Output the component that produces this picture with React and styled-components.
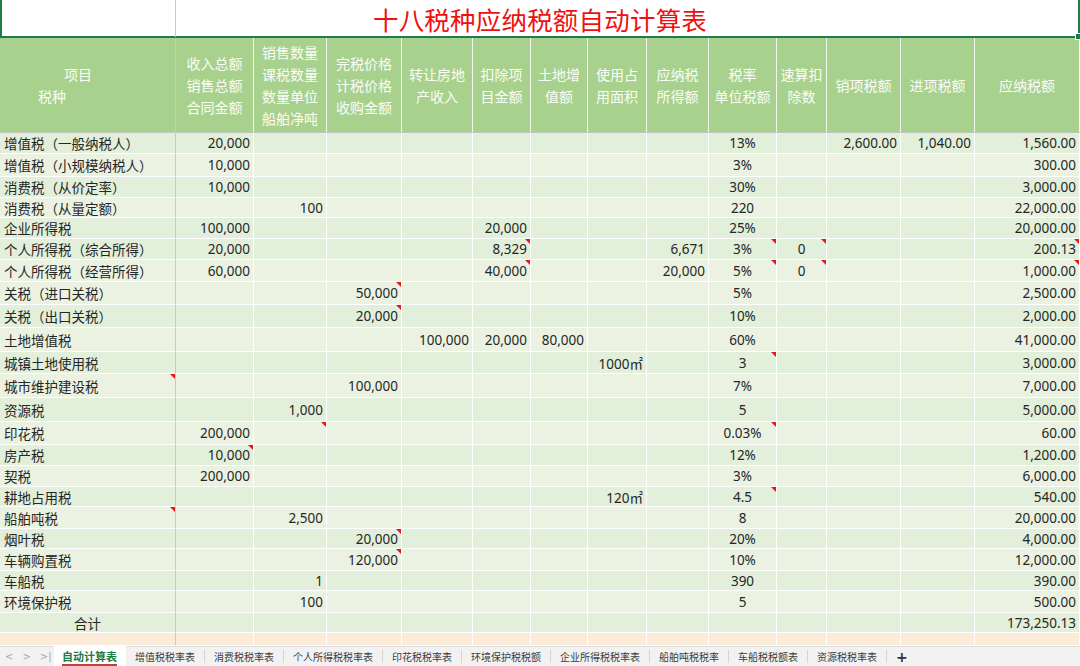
import React from 'react';
import styled, { createGlobalStyle } from 'styled-components';

const COLS = [176, 78, 73, 75, 71, 58, 57, 59, 62, 68, 50, 74, 74, 105];
const GRID = COLS.map((w) => w + 'px').join(' ');
const ALIGN = ['left', 'right', 'right', 'right', 'right', 'right', 'right', 'right', 'right', 'center', 'center', 'right', 'right', 'right'];

const GlobalStyle = createGlobalStyle`
  html, body {
    margin: 0;
    padding: 0;
    background: #ffffff;
    overflow: hidden;
  }
  body {
    font-family: "Noto Sans", "Noto Sans CJK SC", sans-serif;
  }
`;

const Sheet = styled.div`
  width: 1080px;
  height: 666px;
  display: flex;
  flex-direction: column;
  overflow: hidden;
  background: #ffffff;
`;

const TitleRow = styled.div`
  position: relative;
  display: grid;
  grid-template-columns: 174px 1fr;
  height: 38px;
  box-sizing: border-box;
  border-left: 2px solid #1f7a4c;
  border-right: 2px solid #1f7a4c;
  border-bottom: 2px solid #1f7a4c;
`;

const FreezeBlank = styled.div`
  border-right: 1px solid #c8c8c8;
`;

const Title = styled.div`
  display: flex;
  align-items: center;
  justify-content: center;
  padding-right: 174px;
  color: #f01010;
  font-family: "Noto Sans CJK SC", sans-serif;
  font-size: 25.5px;
  letter-spacing: 0.2px;
`;

const FillHandle = styled.span`
  position: absolute;
  right: -4px;
  bottom: -4px;
  width: 5px;
  height: 5px;
  background: #1f7a4c;
  border: 1px solid #ffffff;
`;

const HeaderRow = styled.div`
  display: grid;
  grid-template-columns: ${GRID};
  height: 95px;
  background: #a9d18e;
  border-bottom: 1px solid #c2c8bd;
  box-sizing: border-box;
`;

const HeadCell = styled.div`
  display: flex;
  flex-direction: column;
  align-items: center;
  justify-content: center;
  border-right: 1px solid ${(p) => (p.$freeze ? '#c8c8c8' : 'rgba(255,255,255,0.85)')};
  color: #fbfdf7;
  font-family: "Noto Sans CJK SC", sans-serif;
  font-size: 14px;
  line-height: 22px;
  text-align: center;
  overflow: hidden;
  white-space: nowrap;
`;

const CornerCell = styled(HeadCell)`
  align-items: flex-start;
`;

const CornerLine = styled.span`
  margin-left: ${(p) => p.$indent}px;
`;

const Row = styled.div`
  display: grid;
  grid-template-columns: ${GRID};
  height: ${(p) => p.$h}px;
  background: ${(p) => p.$bg};
`;

const Cell = styled.div`
  position: relative;
  display: flex;
  align-items: center;
  justify-content: ${(p) => (p.$align === 'left' ? 'flex-start' : p.$align === 'center' ? 'center' : 'flex-end')};
  padding: 0 ${(p) => (p.$align === 'right' ? 3 : 0)}px 0 ${(p) => (p.$align === 'left' ? 4 : 0)}px;
  box-sizing: border-box;
  border-right: 1px solid ${(p) => (p.$freeze ? '#c8c8c8' : '#ffffff')};
  border-bottom: 1px solid #ffffff;
  color: #262626;
  font-size: 13.5px;
  white-space: nowrap;
  overflow: hidden;

  &::after {
    content: '';
    display: ${(p) => (p.$note ? 'block' : 'none')};
    position: absolute;
    top: 0;
    right: 0;
    width: 0;
    height: 0;
    border-top: 5px solid #e8161b;
    border-left: 5px solid transparent;
  }
`;

const TabBar = styled.div`
  display: flex;
  align-items: stretch;
  height: 20px;
  background: #f2f2f2;
  border-top: 1px solid #dcdcdc;
  box-sizing: border-box;
  font-family: "Noto Sans CJK SC", sans-serif;
`;

const Nav = styled.div`
  display: flex;
  align-items: center;
  gap: 9px;
  width: 54px;
  padding-left: 5px;
  box-sizing: border-box;
  color: #a6a6a6;
  font-family: "DejaVu Sans", sans-serif;
  font-size: 10px;
`;

const Tab = styled.div`
  display: flex;
  align-items: center;
  padding: 0 ${(p) => (p.$active ? 8 : 9)}px;
  position: relative;
  background: ${(p) => (p.$active ? '#ffffff' : 'transparent')};
  color: ${(p) => (p.$active ? '#1b7a46' : '#3c3c3c')};
  font-size: ${(p) => (p.$active ? 11 : 10)}px;
  font-weight: ${(p) => (p.$active ? 700 : 400)};
  border-right: 1px solid ${(p) => (p.$active ? 'transparent' : '#d4d4d4')};
  margin: ${(p) => (p.$active ? '-1px 0 0' : '3px 0')};

  &::after {
    content: '';
    display: ${(p) => (p.$active ? 'block' : 'none')};
    position: absolute;
    left: 8px;
    right: 8px;
    bottom: 0;
    height: 2px;
    background: #b8433d;
  }
`;

const AddTab = styled.div`
  display: flex;
  align-items: center;
  padding: 0 9px;
  color: #333333;
  font-family: "DejaVu Sans", sans-serif;
  font-size: 14px;
  font-weight: 700;
`;

const HEAD = [
  null,
  ['收入总额', '销售总额', '合同金额'],
  ['销售数量', '课税数量', '数量单位', '船舶净吨'],
  ['完税价格', '计税价格', '收购金额'],
  ['转让房地', '产收入'],
  ['扣除项', '目金额'],
  ['土地增', '值额'],
  ['使用占', '用面积'],
  ['应纳税', '所得额'],
  ['税率', '单位税额'],
  ['速算扣', '除数'],
  ['销项税额'],
  ['进项税额'],
  ['应纳税额'],
];

const DARK = '#e2efda';
const LIGHT = '#ebf2e2';

// [name, values by column index, notes by column index, height, dark]
const ROWS = [
  ['增值税（一般纳税人）', { 1: '20,000', 9: '13%', 11: '2,600.00', 12: '1,040.00', 13: '1,560.00' }, [], 21, true],
  ['增值税（小规模纳税人）', { 1: '10,000', 9: '3%', 13: '300.00' }, [], 23, false],
  ['消费税（从价定率）', { 1: '10,000', 9: '30%', 13: '3,000.00' }, [], 21, true],
  ['消费税（从量定额）', { 2: '100', 9: '220', 13: '22,000.00' }, [], 20, false],
  ['企业所得税', { 1: '100,000', 5: '20,000', 9: '25%', 13: '20,000.00' }, [], 21, true],
  ['个人所得税（综合所得）', { 1: '20,000', 5: '8,329', 8: '6,671', 9: '3%', 10: '0', 13: '200.13' }, [5, 9, 10, 13], 21, true],
  ['个人所得税（经营所得）', { 1: '60,000', 5: '40,000', 8: '20,000', 9: '5%', 10: '0', 13: '1,000.00' }, [5, 9, 10, 13], 22, false],
  ['关税（进口关税）', { 3: '50,000', 9: '5%', 13: '2,500.00' }, [3], 23, false],
  ['关税（出口关税）', { 3: '20,000', 9: '10%', 13: '2,000.00' }, [3], 23, true],
  ['土地增值税', { 4: '100,000', 5: '20,000', 6: '80,000', 9: '60%', 13: '41,000.00' }, [], 24, false],
  ['城镇土地使用税', { 7: '1000㎡', 9: '3', 13: '3,000.00' }, [9], 22, true],
  ['城市维护建设税', { 3: '100,000', 9: '7%', 13: '7,000.00' }, [0], 24, false],
  ['资源税', { 2: '1,000', 9: '5', 13: '5,000.00' }, [], 24, true],
  ['印花税', { 1: '200,000', 9: '0.03%', 13: '60.00' }, [2, 9], 23, false],
  ['房产税', { 1: '10,000', 9: '12%', 13: '1,200.00' }, [1], 21, true],
  ['契税', { 1: '200,000', 9: '3%', 13: '6,000.00' }, [], 21, false],
  ['耕地占用税', { 7: '120㎡', 9: '4.5', 13: '540.00' }, [9], 20, true],
  ['船舶吨税', { 2: '2,500', 9: '8', 13: '20,000.00' }, [0], 22, false],
  ['烟叶税', { 3: '20,000', 9: '20%', 13: '4,000.00' }, [3], 20, true],
  ['车辆购置税', { 3: '120,000', 9: '10%', 13: '12,000.00' }, [3], 22, false],
  ['车船税', { 2: '1', 9: '390', 13: '390.00' }, [], 20, true],
  ['环境保护税', { 2: '100', 9: '5', 13: '500.00' }, [], 22, false],
];

const TABS = ['增值税税率表', '消费税税率表', '个人所得税税率表', '印花税税率表', '环境保护税税额', '企业所得税税率表', '船舶吨税税率', '车船税税额表', '资源税税率表'];

const DataRow = ({ name, values, notes, h, dark }) => (
  <Row $h={h} $bg={dark ? DARK : LIGHT}>
    {COLS.map((_, i) => (
      <Cell key={i} $align={ALIGN[i]} $freeze={i === 0} $note={notes.includes(i)}>
        {i === 0 ? name : values[i]}
      </Cell>
    ))}
  </Row>
);

export default function App() {
  return (
    <Sheet>
      <GlobalStyle />
      <TitleRow>
        <FreezeBlank />
        <Title>十八税种应纳税额自动计算表</Title>
        <FillHandle />
      </TitleRow>

      <HeaderRow>
        <CornerCell $freeze>
          <CornerLine $indent={64}>项目</CornerLine>
          <CornerLine $indent={38}>税种</CornerLine>
        </CornerCell>
        {HEAD.slice(1).map((lines, i) => (
          <HeadCell key={i}>
            {lines.map((l) => (
              <span key={l}>{l}</span>
            ))}
          </HeadCell>
        ))}
      </HeaderRow>

      {ROWS.map(([name, values, notes, h, dark]) => (
        <DataRow key={name} name={name} values={values} notes={notes} h={h} dark={dark} />
      ))}

      <Row $h={20} $bg={DARK}>
        {COLS.map((_, i) => (
          <Cell key={i} $align={i === 0 ? 'center' : ALIGN[i]} $freeze={i === 0}>
            {i === 0 ? '合计' : i === 13 ? '173,250.13' : ''}
          </Cell>
        ))}
      </Row>

      <Row $h={13} $bg="#fdebd9">
        {COLS.map((_, i) => (
          <Cell key={i} $freeze={i === 0} />
        ))}
      </Row>

      <TabBar>
        <Nav>
          <span>&lt;</span>
          <span>&gt;</span>
          <span>&gt;|</span>
        </Nav>
        <Tab $active>自动计算表</Tab>
        {TABS.map((t) => (
          <Tab key={t}>{t}</Tab>
        ))}
        <AddTab>+</AddTab>
      </TabBar>
    </Sheet>
  );
}
